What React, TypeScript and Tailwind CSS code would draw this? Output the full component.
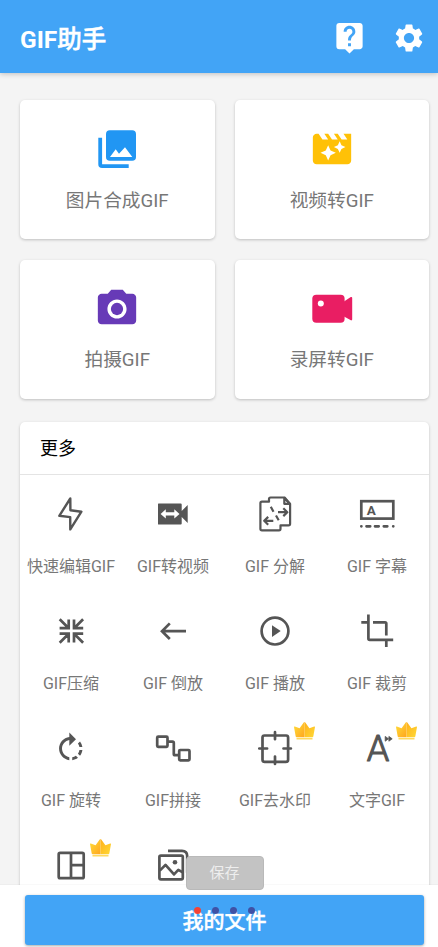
import type { ReactNode } from "react";
import { MdLiveHelp, MdMovieFilter, MdPhotoCamera, MdSettings } from "react-icons/md";

type Feature = { label: string; icon: ReactNode };
type Tool = { id: string; label?: string; icon: ReactNode; vip?: boolean };

const features: Feature[] = [
  {
    label: "图片合成GIF",
    icon: (
      <svg viewBox="0 0 46 46" className="w-[46px] h-[46px]" fill="#2196f3">
        <path d="M15.8 4.3h22.4a3.8 3.8 0 0 1 3.8 3.8v22.8a3.8 3.8 0 0 1-3.8 3.8H15.8a3.8 3.8 0 0 1-3.8-3.8V8.1a3.8 3.8 0 0 1 3.8-3.8zM16 31h22.3L31 21.3l-6 6.4-3.3-4.4z" fillRule="evenodd" />
        <path d="M4.3 11.8h3.8v26.4h26.6V42H8.1a3.8 3.8 0 0 1-3.8-3.8z" />
      </svg>
    ),
  },
  { label: "视频转GIF", icon: <MdMovieFilter className="w-[46px] h-[46px] text-[#ffc107]" /> },
  { label: "拍摄GIF", icon: <MdPhotoCamera className="w-[46px] h-[46px] text-[#673ab7]" /> },
  {
    label: "录屏转GIF",
    icon: (
      <svg viewBox="0 0 46 46" className="w-[46px] h-[46px]" fill="#e91e63">
        <rect x="3.3" y="8.8" width="32.3" height="28" rx="4" />
        <path d="M35 15.6l6.4-4.3c.9-.5 1.8-.1 1.8.8v21.2c0 1-.9 1.4-1.8.8L35 30.5z" />
        <circle cx="11.8" cy="17.4" r="3" fill="#fff" />
      </svg>
    ),
  },
];

const tools: Tool[] = [
  {
    id: "edit",
    label: "快速编辑GIF",
    icon: <path d="M23.3 8.5L12.3 25.8l10.9 1.3.1 12.3L34.4 21.7l-11-1.5z" strokeWidth="2.4" />,
  },
  {
    id: "to-video",
    label: "GIF转视频",
    icon: (
      <>
        <path d="M9.5 13.5H31.7q1 0 1 1V21l6-6v18l-6-6v6.5q0 1-1 1H9.5q-.5 0-.5-.5V14q0-.5.5-.5z" fill="#555" stroke="none" />
        <path d="M11.6 23.9l5.2-4.7v3h8.5v-3l5.2 4.7-5.2 4.7v-3h-8.5v3z" fill="#fff" stroke="none" />
      </>
    ),
  },
  {
    id: "split",
    label: "GIF 分解",
    icon: (
      <g strokeWidth="2.2">
        <path d="M18 11.7h-7q-1.6 0-1.6 1.6V38.7q0 1.6 1.6 1.6H28q1.5 0 1.5-1.6v-3.3h8q1.6 0 1.6-1.6V14l-5.5-6.5H19.5Q18 7.5 18 9z" />
        <path d="M33.3 8v5.800h5.500z" />
        <path d="M19.800 16.800l2.700 5M25 25.500l2.700 4.700M27 22.200h9.300M32.300 18.300l4 3.900-4 3.900M22.300 30.800H13.200M17.200 26.900l-4 3.900 4 3.900" />
      </g>
    ),
  },
  {
    id: "subtitle",
    label: "GIF 字幕",
    icon: (
      <>
        <rect x="8.300" y="11.200" width="32" height="17.400" strokeLinejoin="miter" />
        <text x="18.200" y="24.900" textAnchor="middle" className="font-['Roboto'] text-[13.5px] font-bold" fill="#555" stroke="none">A</text>
        <path d="M8.300 36.300h.1M13.500 36.300h3.700M22 36.300h3.700M30.800 36.300h3.500M40.200 36.300h.1" strokeLinecap="round" />
      </>
    ),
  },
  {
    id: "compress",
    label: "GIF压缩",
    icon: (
      <path d="M12.700 12.300l8.500 8.500M12.600 21.200h9.100v-8.700M36.100 12.300l-8.500 8.500M36.200 21.200H27v-8.700M12.700 35.700l8.500-8.500M12.600 26.700h9.100v8.800M36.100 35.700l-8.500-8.500M36.200 26.700H27v8.800" strokeLinejoin="miter" />
    ),
  },
  { id: "reverse", label: "GIF 倒放", icon: <path d="M37 24.200H13M20.800 16.400L13 24.200l7.800 7.800" strokeLinejoin="miter" /> },
  {
    id: "play",
    label: "GIF 播放",
    icon: (
      <>
        <circle cx="24" cy="24.100" r="13.400" />
        <path d="M21 18.200l8.700 5.900-8.700 5.900z" fill="#555" stroke="none" />
      </>
    ),
  },
  {
    id: "crop",
    label: "GIF 裁剪",
    icon: <path d="M15.400 7.600V31.500q0 1.300 1.300 1.300H40.200M8.300 15.300h7M20 15.300h12q1.300 0 1.300 1.300v11.900M33.300 33v7" />,
  },
  {
    id: "rotate",
    label: "GIF 旋转",
    icon: (
      <path
        transform="translate(6.2 7) scale(1.465)"
        d="M15.55 5.55L11 1v3.070C7.060 4.560 4 7.920 4 12s3.050 7.440 7 7.930v-2.020c-2.840-.48-5-2.940-5-5.910s2.160-5.430 5-5.910V10l4.550-4.450zM19.930 11a7.906 7.906 0 0 0-1.620-3.890l-1.420 1.420c.54.75.88 1.600 1.020 2.470h2.020zM13 17.900v2.020c1.390-.17 2.740-.71 3.900-1.610l-1.440-1.440c-.75.54-1.590.89-2.460 1.030zm3.890-2.420l1.420 1.410c.9-1.160 1.450-2.500 1.620-3.890h-2.020c-.14.87-.48 1.720-1.020 2.480z"
        fill="#555"
        stroke="none"
      />
    ),
  },
  {
    id: "join",
    label: "GIF拼接",
    icon: (
      <>
        <rect x="8.200" y="12.700" width="10.300" height="10.100" rx="1" />
        <rect x="30.200" y="26" width="10.300" height="10.300" rx="1" />
        <path d="M19 17.600h4.500q1.300 0 1.300 1.300v11q0 1.300 1.300 1.300H30" />
      </>
    ),
  },
  {
    id: "watermark",
    label: "GIF去水印",
    vip: true,
    icon: (
      <>
        <rect x="11.500" y="11.500" width="25.600" height="26.300" rx="2" />
        <path d="M8.300 24.500h7.800M32.500 24.500h7.400M24 8.200v7M24 32.500v7.400" strokeLinecap="round" />
      </>
    ),
  },
  {
    id: "text",
    label: "文字GIF",
    vip: true,
    icon: (
      <>
        <text x="25" y="36.900" textAnchor="middle" className="font-['Roboto'] text-[36px] font-light" fill="#555" strokeWidth="1.1">A</text>
        <path d="M32.200 12.400l3.300 2.400-3.300 2.400zM35.900 12.400l3.300 2.400-3.300 2.400z" fill="#555" strokeWidth=".8" />
      </>
    ),
  },
  {
    id: "layout",
    vip: true,
    icon: (
      <>
        <rect x="11.700" y="11.900" width="25" height="25.300" rx="1.500" />
        <path d="M24 12v25M24 24.200h12.700" />
      </>
    ),
  },
  {
    id: "gallery",
    icon: (
      <>
        <rect x="10.400" y="14.600" width="23.400" height="23.700" rx="1.500" />
        <path d="M19 9.900h14q5.200 0 5.200 5.200v16.700M10.800 29.600l5.700-5.700 8.500 9.500 4.300-4.500 4.500 2.500" />
        <circle cx="26" cy="21.200" r="2.300" fill="#555" stroke="none" />
      </>
    ),
  },
];

function Crown() {
  return (
    <svg viewBox="0 0 21 18" className="absolute left-[69.5px] top-[13.5px] w-[21px] h-[18px]">
      <defs>
        <linearGradient id="crown" x1="0" y1="0" x2="1" y2="1">
          <stop offset="0" stopColor="#ffdf3a" />
          <stop offset="1" stopColor="#ffa51e" />
        </linearGradient>
        <linearGradient id="crownRight" x1="0" y1="0" x2="1" y2="1">
          <stop offset="0" stopColor="#ffb01a" />
          <stop offset="1" stopColor="#ffd935" />
        </linearGradient>
      </defs>
      <path d="M0 5q0-.8.8-.5l4.800 1.800L9.700.6q.4-.5.8-.5v15.100H2.600q-.7 0-.9-.8z" fill="url(#crown)" />
      <path d="M21 5q0-.8-.8-.5l-4.800 1.800L11.300.6q-.4-.5-.8-.5v15.100h7.900q.7 0 .9-.8z" fill="url(#crownRight)" />
      <path d="M2.500 15.900h16v1.600h-16z" fill="#ffd95e" />
    </svg>
  );
}

export default function App() {
  return (
    <div className="relative flex flex-col w-[438px] h-[947px] overflow-hidden bg-[#f4f4f4] font-['Roboto','Noto_Sans_CJK_SC',sans-serif]">
      <header className="relative z-10 shrink-0 h-[72.5px] pl-5 pr-[14px] flex items-center bg-[#42a4f6] text-white shadow-[0_1px_5px_rgba(0,0,0,0.22)]">
        <h1 className="flex-1 pt-[7px] text-[24.5px] leading-8 font-bold">
          GIF<span className="font-medium [-webkit-text-stroke:0.5px_white]">助手</span>
        </h1>
        <div className="flex items-center gap-[25px] pt-[3px]">
          <MdLiveHelp className="w-[35px] h-[35px]" />
          <MdSettings className="w-[34px] h-[34px] -mr-[2px]" />
        </div>
      </header>

      <main className="flex-1 min-h-0 overflow-hidden pt-[27.5px] pl-5 pr-[9px]">
        <div className="grid grid-cols-2 gap-x-5 gap-y-[20.5px]">
          {features.map((item) => (
            <button
              key={item.label}
              className="h-[139.2px] pt-[26px] flex flex-col items-center rounded-[5px] bg-white shadow-[0_1px_3px_rgba(0,0,0,0.22)]"
            >
              {item.icon}
              <span className="mt-[14.5px] text-[18.7px] leading-7 text-[#777]">{item.label}</span>
            </button>
          ))}
        </div>

        <section className="mt-[23px] rounded-[5px] bg-white shadow-[0_1px_3px_rgba(0,0,0,0.22)]">
          <h2 className="h-[53px] pl-5 pt-[2px] flex items-center border-b border-[#e4e4e4] text-[18px] text-black">更多</h2>
          <div className="grid grid-cols-[repeat(4,102px)]">
            {tools.map((tool) => (
              <button key={tool.id} className="relative h-[117px] pt-[15.5px] flex flex-col items-center">
                <svg
                  viewBox="0 0 48 48"
                  className="w-12 h-12"
                  fill="none"
                  stroke="#555"
                  strokeWidth="2.7"
                  strokeLinejoin="round"
                >
                  {tool.icon}
                </svg>
                {tool.vip && <Crown />}
                {tool.label && (
                  <span className="mt-[17px] text-[16px] leading-6 whitespace-nowrap text-[#777]">{tool.label}</span>
                )}
              </button>
            ))}
          </div>
        </section>
      </main>

      <footer className="relative z-10 shrink-0 h-[62px] pt-[10px] pl-[25px] pr-[14px] bg-white shadow-[0_0_1px_rgba(0,0,0,0.15)]">
        <button className="w-full h-[50px] flex items-center justify-center pt-[4px] rounded-[3px] bg-[#42a4f6] text-[21px] font-medium text-white [-webkit-text-stroke:0.4px_white] shadow-[0_1px_3px_rgba(0,0,0,0.35)]">
          我的文件
        </button>
      </footer>

      {/* save popup and page dots float over the footer */}
      <div className="absolute z-20 left-[185.5px] top-[855.5px] w-[78px] h-[34px] flex items-center justify-center pt-[2px] rounded-[4px] border border-[#b9b9b9] bg-[#c3c3c3] text-[15px] text-[#eee]">
        保存
      </div>
      <div className="absolute z-20 left-[193.5px] top-[907px] flex gap-[11px]">
        <span className="w-[7px] h-[7px] rounded-full bg-[#f44336]" />
        <span className="w-[7px] h-[7px] rounded-full bg-[#3f51a5]" />
        <span className="w-[7px] h-[7px] rounded-full bg-[#3f51a5]" />
        <span className="w-[7px] h-[7px] rounded-full bg-[#3f51a5]" />
      </div>
    </div>
  );
}
